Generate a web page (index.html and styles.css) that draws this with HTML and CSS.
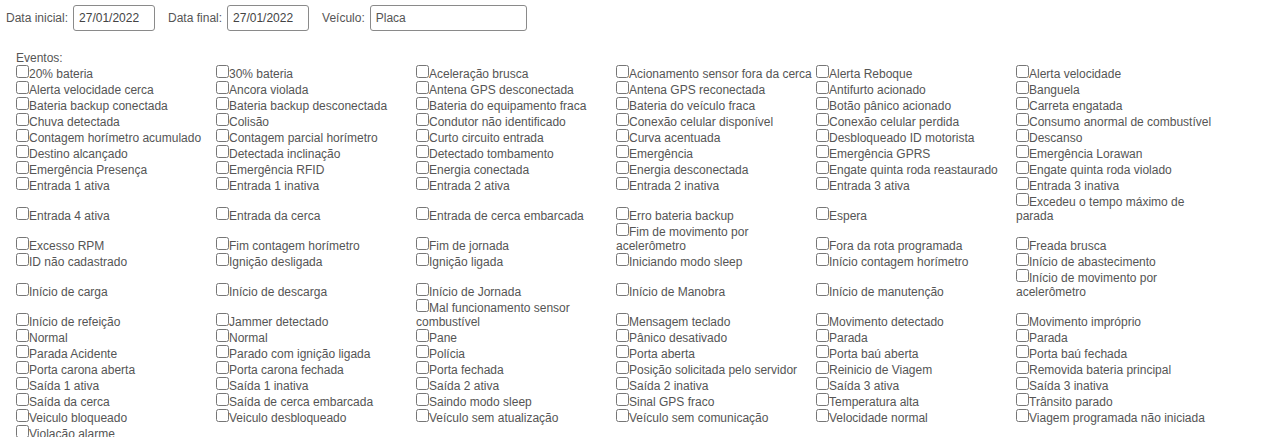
FILE: index.html
```html
<!DOCTYPE html>
<html lang="pt-BR">
<head>
  <meta charset="UTF-8">
  <title>Relatório de eventos</title>
  <link rel="stylesheet" href="styles.css">
</head>
<body>
  <div class="filters">
    <label class="filter-label" for="dataInicial">Data inicial:</label>
    <input class="filter-input input-date" id="dataInicial" type="text" value="27/01/2022">
    <label class="filter-label" for="dataFinal">Data final:</label>
    <input class="filter-input input-date" id="dataFinal" type="text" value="27/01/2022">
    <label class="filter-label" for="veiculo">Veículo:</label>
    <input class="filter-input input-plate" id="veiculo" type="text" placeholder="Placa">
  </div>

  <div class="events">
    <div class="events-title">Eventos:</div>
    <div class="events-grid">
      <label class="event"><input type="checkbox">20% bateria</label>
      <label class="event"><input type="checkbox">30% bateria</label>
      <label class="event"><input type="checkbox">Aceleração brusca</label>
      <label class="event"><input type="checkbox">Acionamento sensor fora da cerca</label>
      <label class="event"><input type="checkbox">Alerta Reboque</label>
      <label class="event"><input type="checkbox">Alerta velocidade</label>

      <label class="event"><input type="checkbox">Alerta velocidade cerca</label>
      <label class="event"><input type="checkbox">Ancora violada</label>
      <label class="event"><input type="checkbox">Antena GPS desconectada</label>
      <label class="event"><input type="checkbox">Antena GPS reconectada</label>
      <label class="event"><input type="checkbox">Antifurto acionado</label>
      <label class="event"><input type="checkbox">Banguela</label>

      <label class="event"><input type="checkbox">Bateria backup conectada</label>
      <label class="event"><input type="checkbox">Bateria backup desconectada</label>
      <label class="event"><input type="checkbox">Bateria do equipamento fraca</label>
      <label class="event"><input type="checkbox">Bateria do veículo fraca</label>
      <label class="event"><input type="checkbox">Botão pânico acionado</label>
      <label class="event"><input type="checkbox">Carreta engatada</label>

      <label class="event"><input type="checkbox">Chuva detectada</label>
      <label class="event"><input type="checkbox">Colisão</label>
      <label class="event"><input type="checkbox">Condutor não identificado</label>
      <label class="event"><input type="checkbox">Conexão celular disponível</label>
      <label class="event"><input type="checkbox">Conexão celular perdida</label>
      <label class="event"><input type="checkbox">Consumo anormal de combustível</label>

      <label class="event"><input type="checkbox">Contagem horímetro acumulado</label>
      <label class="event"><input type="checkbox">Contagem parcial horímetro</label>
      <label class="event"><input type="checkbox">Curto circuito entrada</label>
      <label class="event"><input type="checkbox">Curva acentuada</label>
      <label class="event"><input type="checkbox">Desbloqueado ID motorista</label>
      <label class="event"><input type="checkbox">Descanso</label>

      <label class="event"><input type="checkbox">Destino alcançado</label>
      <label class="event"><input type="checkbox">Detectada inclinação</label>
      <label class="event"><input type="checkbox">Detectado tombamento</label>
      <label class="event"><input type="checkbox">Emergência</label>
      <label class="event"><input type="checkbox">Emergência GPRS</label>
      <label class="event"><input type="checkbox">Emergência Lorawan</label>

      <label class="event"><input type="checkbox">Emergência Presença</label>
      <label class="event"><input type="checkbox">Emergência RFID</label>
      <label class="event"><input type="checkbox">Energia conectada</label>
      <label class="event"><input type="checkbox">Energia desconectada</label>
      <label class="event"><input type="checkbox">Engate quinta roda reastaurado</label>
      <label class="event"><input type="checkbox">Engate quinta roda violado</label>

      <label class="event"><input type="checkbox">Entrada 1 ativa</label>
      <label class="event"><input type="checkbox">Entrada 1 inativa</label>
      <label class="event"><input type="checkbox">Entrada 2 ativa</label>
      <label class="event"><input type="checkbox">Entrada 2 inativa</label>
      <label class="event"><input type="checkbox">Entrada 3 ativa</label>
      <label class="event"><input type="checkbox">Entrada 3 inativa</label>

      <label class="event"><input type="checkbox">Entrada 4 ativa</label>
      <label class="event"><input type="checkbox">Entrada da cerca</label>
      <label class="event"><input type="checkbox">Entrada de cerca embarcada</label>
      <label class="event"><input type="checkbox">Erro bateria backup</label>
      <label class="event"><input type="checkbox">Espera</label>
      <label class="event"><input type="checkbox">Excedeu o tempo máximo de parada</label>

      <label class="event"><input type="checkbox">Excesso RPM</label>
      <label class="event"><input type="checkbox">Fim contagem horímetro</label>
      <label class="event"><input type="checkbox">Fim de jornada</label>
      <label class="event"><input type="checkbox">Fim de movimento por acelerômetro</label>
      <label class="event"><input type="checkbox">Fora da rota programada</label>
      <label class="event"><input type="checkbox">Freada brusca</label>

      <label class="event"><input type="checkbox">ID não cadastrado</label>
      <label class="event"><input type="checkbox">Ignição desligada</label>
      <label class="event"><input type="checkbox">Ignição ligada</label>
      <label class="event"><input type="checkbox">Iniciando modo sleep</label>
      <label class="event"><input type="checkbox">Início contagem horímetro</label>
      <label class="event"><input type="checkbox">Início de abastecimento</label>

      <label class="event"><input type="checkbox">Início de carga</label>
      <label class="event"><input type="checkbox">Início de descarga</label>
      <label class="event"><input type="checkbox">Início de Jornada</label>
      <label class="event"><input type="checkbox">Início de Manobra</label>
      <label class="event"><input type="checkbox">Início de manutenção</label>
      <label class="event"><input type="checkbox">Início de movimento por acelerômetro</label>

      <label class="event"><input type="checkbox">Início de refeição</label>
      <label class="event"><input type="checkbox">Jammer detectado</label>
      <label class="event"><input type="checkbox">Mal funcionamento sensor combustível</label>
      <label class="event"><input type="checkbox">Mensagem teclado</label>
      <label class="event"><input type="checkbox">Movimento detectado</label>
      <label class="event"><input type="checkbox">Movimento impróprio</label>

      <label class="event"><input type="checkbox">Normal</label>
      <label class="event"><input type="checkbox">Normal</label>
      <label class="event"><input type="checkbox">Pane</label>
      <label class="event"><input type="checkbox">Pânico desativado</label>
      <label class="event"><input type="checkbox">Parada</label>
      <label class="event"><input type="checkbox">Parada</label>

      <label class="event"><input type="checkbox">Parada Acidente</label>
      <label class="event"><input type="checkbox">Parado com ignição ligada</label>
      <label class="event"><input type="checkbox">Polícia</label>
      <label class="event"><input type="checkbox">Porta aberta</label>
      <label class="event"><input type="checkbox">Porta baú aberta</label>
      <label class="event"><input type="checkbox">Porta baú fechada</label>

      <label class="event"><input type="checkbox">Porta carona aberta</label>
      <label class="event"><input type="checkbox">Porta carona fechada</label>
      <label class="event"><input type="checkbox">Porta fechada</label>
      <label class="event"><input type="checkbox">Posição solicitada pelo servidor</label>
      <label class="event"><input type="checkbox">Reinicio de Viagem</label>
      <label class="event"><input type="checkbox">Removida bateria principal</label>

      <label class="event"><input type="checkbox">Saída 1 ativa</label>
      <label class="event"><input type="checkbox">Saída 1 inativa</label>
      <label class="event"><input type="checkbox">Saída 2 ativa</label>
      <label class="event"><input type="checkbox">Saída 2 inativa</label>
      <label class="event"><input type="checkbox">Saída 3 ativa</label>
      <label class="event"><input type="checkbox">Saída 3 inativa</label>

      <label class="event"><input type="checkbox">Saída da cerca</label>
      <label class="event"><input type="checkbox">Saída de cerca embarcada</label>
      <label class="event"><input type="checkbox">Saindo modo sleep</label>
      <label class="event"><input type="checkbox">Sinal GPS fraco</label>
      <label class="event"><input type="checkbox">Temperatura alta</label>
      <label class="event"><input type="checkbox">Trânsito parado</label>

      <label class="event"><input type="checkbox">Veiculo bloqueado</label>
      <label class="event"><input type="checkbox">Veiculo desbloqueado</label>
      <label class="event"><input type="checkbox">Veículo sem atualização</label>
      <label class="event"><input type="checkbox">Veículo sem comunicação</label>
      <label class="event"><input type="checkbox">Velocidade normal</label>
      <label class="event"><input type="checkbox">Viagem programada não iniciada</label>

      <label class="event"><input type="checkbox">Violação alarme</label>
    </div>
  </div>
</body>
</html>
```

FILE: styles.css
```css
body {
  margin: 0;
  font-family: "Liberation Sans", Arial, sans-serif;
  font-size: 12px;
  color: #555;
  background: #fff;
}

.filters {
  display: flex;
  align-items: center;
  height: 26px;
  padding: 5px 6px;
}

.filter-label {
  margin-right: 5px;
}

.filter-input {
  box-sizing: border-box;
  height: 26px;
  padding: 0 5px;
  margin-right: 13px;
  border: 1px solid #8a8a8a;
  border-radius: 3px;
  font-family: inherit;
  font-size: 12px;
  color: #444;
  background: #fff;
}

.filter-input::placeholder {
  color: #555;
}

.input-date {
  width: 82px;
}

.input-plate {
  width: 157px;
}

.events {
  padding: 15px 16px 0;
}

.events-title {
  line-height: normal;
}

.events-grid {
  display: grid;
  grid-template-columns: repeat(6, 200px);
  align-items: end;
}

.event {
  display: block;
}

.event input {
  margin: 0;
  vertical-align: baseline;
}
```
